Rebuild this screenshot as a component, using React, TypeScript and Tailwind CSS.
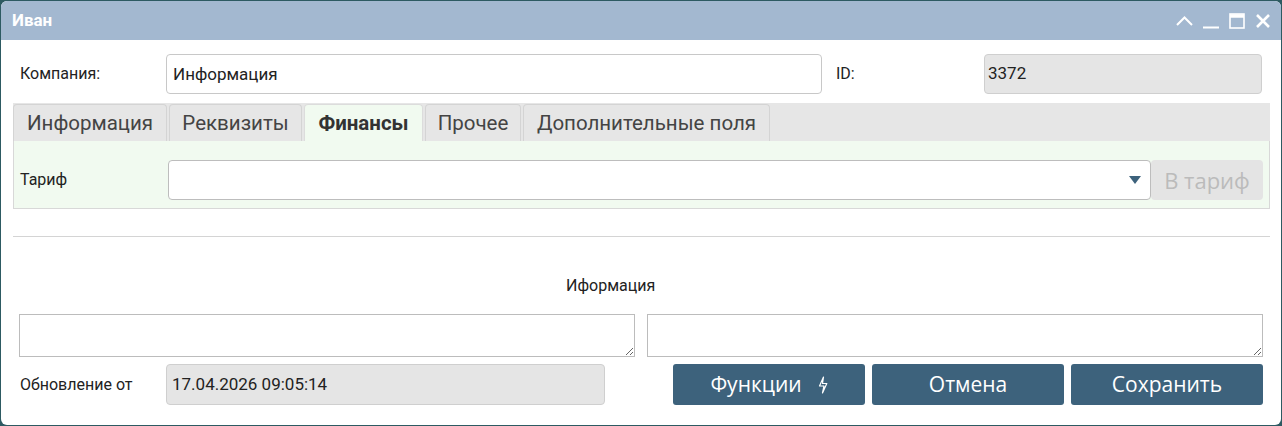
import React from "react";

const roboto = { fontFamily: "Roboto, 'Liberation Sans', sans-serif" };
const openSans = { fontFamily: "'Open Sans', 'Noto Sans', sans-serif" };

function TitleIcons() {
  return (
    <div className="flex items-center gap-[10px] text-white">
      <svg width="17" height="10" viewBox="0 0 17 10" fill="none" stroke="currentColor" strokeWidth="2">
        <path d="M1 9 L8.5 1.5 L16 9" />
      </svg>
      <svg width="16" height="16" viewBox="0 0 16 16" fill="none" stroke="currentColor" strokeWidth="2">
        <path d="M0 14.5 H16" />
      </svg>
      <svg width="16" height="16" viewBox="0 0 16 16" fill="none" stroke="currentColor">
        <rect x="1" y="1" width="14" height="14" strokeWidth="1.6" />
        <path d="M1 3 H15" strokeWidth="3.5" />
      </svg>
      <svg width="16" height="16" viewBox="0 0 16 16" fill="none" stroke="currentColor" strokeWidth="2.6">
        <path d="M2 2 L14 14 M14 2 L2 14" />
      </svg>
    </div>
  );
}

const tabs = ["Информация", "Реквизиты", "Финансы", "Прочее", "Дополнительные поля"];
const tabWidths = ["w-[154px]", "w-[133px]", "w-[119px]", "w-[96px]", "w-[247px]"];

export default function App() {
  const active = 2;
  return (
    <div className="h-[426px] w-[1282px] bg-[#2d5a62] p-px" style={roboto}>
      <div className="flex h-full flex-col overflow-hidden rounded-[6px] bg-white">
        {/* Title bar */}
        <div className="flex h-[39px] shrink-0 items-center justify-between bg-[#a3b8d0] pl-[11px] pr-[10px]">
          <span className="text-[17px] font-bold text-white">Иван</span>
          <TitleIcons />
        </div>

        <div className="flex flex-col pl-[12px] pr-[11px]">
          {/* Company row */}
          <div className="mt-[14px] flex h-[40px] items-center">
            <span className="w-[153px] pl-[7px] text-[16px] text-[#222]">Компания:</span>
            <input
              defaultValue="Информация"
              className="h-full w-[656px] rounded-[4px] border border-[#c8c8c8] bg-white px-[6px] text-[17px] text-[#222] outline-none"
              style={roboto}
            />
            <span className="ml-[14px] w-[148px] text-[16px] text-[#222]">ID:</span>
            <div className="flex h-full w-[278px] items-center rounded-[4px] border border-[#cfcfcf] bg-[#e5e5e5] px-[3px] text-[17px] text-[#222]">
              3372
            </div>
          </div>

          {/* Tabs */}
          <div className="mt-[9px] flex h-[38px] gap-[2px] bg-[#e6e6e6] pt-px">
            {tabs.map((t, i) => (
              <div
                key={t}
                className={
                  i === active
                    ? `${tabWidths[i]} flex items-center justify-center rounded-t-[4px] border border-b-0 border-[#dcdcdc] bg-[#f1faf0] text-[20.5px] font-bold text-[#333]`
                    : `${tabWidths[i]} flex items-center justify-center rounded-t-[4px] border border-b-0 border-[#d4d4d4] bg-[#e6e6e6] text-[20.5px] text-[#444]`
                }
              >
                {t}
              </div>
            ))}
          </div>

          {/* Tab content */}
          <div className="flex h-[68px] items-start border border-t-0 border-[#d8d8d8] bg-[#f1faf0] pt-[19px]">
            <span className="w-[154px] pl-[6px] text-[16px] leading-[40px] text-[#222]">Тариф</span>
            <div className="flex h-[40px] w-[983px] items-center justify-end rounded-[4px] border border-[#bdbdbd] bg-white pr-[9px]">
              <svg width="12" height="8" viewBox="0 0 12 8">
                <path d="M0 0 H12 L6 8 Z" fill="#3d627c" />
              </svg>
            </div>
            <div
              className="flex h-[40px] w-[112px] items-center justify-center rounded-[4px] bg-[#e4e4e4] text-[22px] text-[#bbbbbb]"
              style={openSans}
            >
              В тариф
            </div>
          </div>

          {/* Divider */}
          <div className="mt-[27px] h-px bg-[#d4d4d4]" />

          <div className="mt-[39px] pl-[553px] text-[16px] leading-[19px] text-[#222]">Иформация</div>

          {/* Text areas */}
          <div className="mt-[19px] flex gap-[12px] pl-[6px] pr-[7px]">
            <textarea className="h-[43px] w-[616px] border border-[#bcbcbc] bg-white outline-none" />
            <textarea className="h-[43px] w-[616px] border border-[#bcbcbc] bg-white outline-none" />
          </div>

          {/* Bottom row */}
          <div className="mt-[7px] flex h-[41px] items-center pr-[7px]">
            <span className="w-[153px] pl-[7px] text-[16px] text-[#222]">Обновление от</span>
            <div className="flex h-full w-[439px] items-center rounded-[4px] border border-[#cfcfcf] bg-[#e5e5e5] px-[5px] text-[17px] text-[#222]">
              17.04.2026 09:05:14
            </div>
            <div className="ml-auto flex h-full gap-[7px]" style={openSans}>
              <button className="flex w-[192px] items-center justify-center gap-[16px] rounded-[3px] bg-[#3d627c] text-[21px] text-white">
                Функции
                <svg width="10" height="18" viewBox="0 0 10 18" fill="none" stroke="white" strokeWidth="1.2" strokeLinejoin="round">
                  <path d="M5.5 1 L1.5 10 H6 L4.5 17 L8.8 7.5 H4.5 Z" />
                </svg>
              </button>
              <button className="flex w-[192px] items-center justify-center rounded-[3px] bg-[#3d627c] text-[21px] text-white">
                Отмена
              </button>
              <button className="flex w-[192px] items-center justify-center rounded-[3px] bg-[#3d627c] text-[21px] text-white">
                Сохранить
              </button>
            </div>
          </div>
        </div>
      </div>
    </div>
  );
}
